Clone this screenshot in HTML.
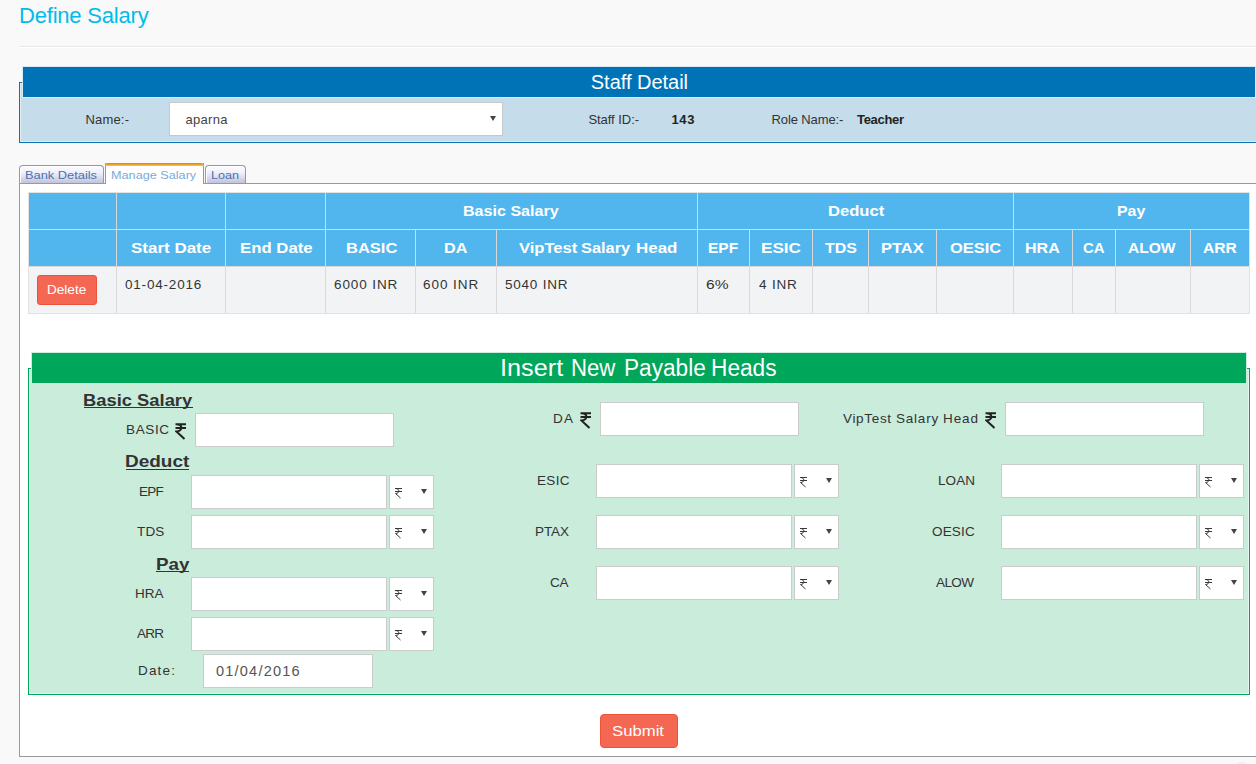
<!DOCTYPE html>
<html><head><meta charset="utf-8"><title>Define Salary</title>
<style>
html,body{margin:0;padding:0;}
body{width:1256px;height:764px;overflow:hidden;background:#f9f9f9;position:relative;font-family:"Liberation Sans",sans-serif;}
.a{position:absolute;box-sizing:border-box;}
.t{position:absolute;line-height:1;white-space:pre;font-family:"Liberation Sans",sans-serif;}
.inp{position:absolute;box-sizing:border-box;background:#fff;border:1px solid #cbcbcb;}
.vl{position:absolute;width:1px;background:#d9d9d9;}
.hl{position:absolute;height:1px;background:#d9d9d9;}
.arr{position:absolute;width:0;height:0;border-left:3px solid transparent;border-right:3px solid transparent;border-top:5px solid #444;}
.ru{position:absolute;}
</style></head><body>
<div class="a" style="left:19px;top:46px;width:1237px;height:1px;background:#e8e8e8"></div>
<div class="a" style="left:19px;top:47px;width:1237px;height:1px;background:#fff"></div>
<div class="a" style="left:19px;top:82px;width:1241px;height:61px;border:1px solid #0b73b6;background:#c5dcea;box-shadow:inset 0 0 0 1px rgba(255,255,255,.45)"></div>
<div class="a" style="left:22px;top:66px;width:1234px;height:32px;border:1px solid rgba(255,255,255,.85);background:#0073b7"></div>
<div class="a" style="left:169px;top:102px;width:334px;height:34px;border:1px solid #c8c8c8;background:#fff"></div>
<div class="arr" style="left:490px;top:116px"></div>
<div class="a" style="left:19px;top:183px;width:1242px;height:574px;border:1px solid #9a9a9a;background:#fff"></div>
<div class="a" style="left:19px;top:165px;width:85px;height:18px;border:1px solid #8c9ca4;border-bottom:none;border-radius:4px 4px 0 0;background:linear-gradient(#fbfbff,#f0f0fa 40%,#c2c2db);box-shadow:inset 1px 1px 0 #fff"></div>
<div class="a" style="left:205px;top:165px;width:41px;height:18px;border:1px solid #8c9ca4;border-bottom:none;border-radius:4px 4px 0 0;background:linear-gradient(#fbfbff,#f0f0fa 40%,#c2c2db);box-shadow:inset 1px 1px 0 #fff"></div>
<div class="a" style="left:105px;top:163px;width:99px;height:21px;border-left:1px solid #8c9ca4;border-right:1px solid #8c9ca4;background:#fff"></div>
<div class="a" style="left:105px;top:163px;width:99px;height:3px;border-radius:3px 3px 0 0;background:linear-gradient(#e07d14,#ffc63a)"></div>
<div class="a" style="left:28px;top:192px;width:1222px;height:122px;border:1px solid #e2e2e2;background:#f2f3f5"></div>
<div class="a" style="left:29px;top:193px;width:1220px;height:73px;background:#52b6ee"></div>
<div class="hl" style="left:29px;top:229px;width:1220px"></div>
<div class="hl" style="left:29px;top:266px;width:1220px"></div>
<div class="vl" style="left:116px;top:193px;height:120px"></div>
<div class="vl" style="left:225px;top:193px;height:120px"></div>
<div class="vl" style="left:325px;top:193px;height:120px"></div>
<div class="vl" style="left:697px;top:193px;height:120px"></div>
<div class="vl" style="left:1013px;top:193px;height:120px"></div>
<div class="vl" style="left:415px;top:230px;height:83px"></div>
<div class="vl" style="left:496px;top:230px;height:83px"></div>
<div class="vl" style="left:749px;top:230px;height:83px"></div>
<div class="vl" style="left:812px;top:230px;height:83px"></div>
<div class="vl" style="left:868px;top:230px;height:83px"></div>
<div class="vl" style="left:936px;top:230px;height:83px"></div>
<div class="vl" style="left:1072px;top:230px;height:83px"></div>
<div class="vl" style="left:1115px;top:230px;height:83px"></div>
<div class="vl" style="left:1190px;top:230px;height:83px"></div>
<div class="a" style="left:37px;top:275px;width:60px;height:30px;border:1px solid #ee5239;border-radius:3px;background:#f46853"></div>
<div class="a" style="left:28px;top:368px;width:1222px;height:327px;border:1px solid #00a65a;background:#caecdb;box-shadow:inset 0 0 0 1px rgba(255,255,255,.45)"></div>
<div class="a" style="left:31px;top:352px;width:1216px;height:32px;border:1px solid rgba(255,255,255,.8);background:#00a65a"></div>
<div class="inp" style="left:195px;top:413px;width:199px;height:34px"></div>
<div class="inp" style="left:191px;top:475px;width:196px;height:34px"></div>
<div class="inp" style="left:389px;top:475px;width:45px;height:34px"></div>
<div class="arr" style="left:421px;top:489px"></div>
<svg class="ru" style="left:395px;top:488px" width="8" height="11" viewBox="0 0 8 11"><path d="M0 0.5H7M0 3.5H7M0.5 0.5C5 0.5 5 5.5 0.5 5.5L5.5 10" fill="none" stroke="#3a3a3a" stroke-width="1"/></svg>
<div class="inp" style="left:191px;top:515px;width:196px;height:34px"></div>
<div class="inp" style="left:389px;top:515px;width:45px;height:34px"></div>
<div class="arr" style="left:421px;top:529px"></div>
<svg class="ru" style="left:395px;top:528px" width="8" height="11" viewBox="0 0 8 11"><path d="M0 0.5H7M0 3.5H7M0.5 0.5C5 0.5 5 5.5 0.5 5.5L5.5 10" fill="none" stroke="#3a3a3a" stroke-width="1"/></svg>
<div class="inp" style="left:191px;top:577px;width:196px;height:34px"></div>
<div class="inp" style="left:389px;top:577px;width:45px;height:34px"></div>
<div class="arr" style="left:421px;top:591px"></div>
<svg class="ru" style="left:395px;top:590px" width="8" height="11" viewBox="0 0 8 11"><path d="M0 0.5H7M0 3.5H7M0.5 0.5C5 0.5 5 5.5 0.5 5.5L5.5 10" fill="none" stroke="#3a3a3a" stroke-width="1"/></svg>
<div class="inp" style="left:191px;top:617px;width:196px;height:34px"></div>
<div class="inp" style="left:389px;top:617px;width:45px;height:34px"></div>
<div class="arr" style="left:421px;top:631px"></div>
<svg class="ru" style="left:395px;top:630px" width="8" height="11" viewBox="0 0 8 11"><path d="M0 0.5H7M0 3.5H7M0.5 0.5C5 0.5 5 5.5 0.5 5.5L5.5 10" fill="none" stroke="#3a3a3a" stroke-width="1"/></svg>
<div class="inp" style="left:203px;top:654px;width:170px;height:34px"></div>
<div class="inp" style="left:600px;top:402px;width:199px;height:34px"></div>
<div class="inp" style="left:596px;top:464px;width:196px;height:34px"></div>
<div class="inp" style="left:794px;top:464px;width:45px;height:34px"></div>
<div class="arr" style="left:826px;top:478px"></div>
<svg class="ru" style="left:800px;top:477px" width="8" height="11" viewBox="0 0 8 11"><path d="M0 0.5H7M0 3.5H7M0.5 0.5C5 0.5 5 5.5 0.5 5.5L5.5 10" fill="none" stroke="#3a3a3a" stroke-width="1"/></svg>
<div class="inp" style="left:596px;top:515px;width:196px;height:34px"></div>
<div class="inp" style="left:794px;top:515px;width:45px;height:34px"></div>
<div class="arr" style="left:826px;top:529px"></div>
<svg class="ru" style="left:800px;top:528px" width="8" height="11" viewBox="0 0 8 11"><path d="M0 0.5H7M0 3.5H7M0.5 0.5C5 0.5 5 5.5 0.5 5.5L5.5 10" fill="none" stroke="#3a3a3a" stroke-width="1"/></svg>
<div class="inp" style="left:596px;top:566px;width:196px;height:34px"></div>
<div class="inp" style="left:794px;top:566px;width:45px;height:34px"></div>
<div class="arr" style="left:826px;top:580px"></div>
<svg class="ru" style="left:800px;top:579px" width="8" height="11" viewBox="0 0 8 11"><path d="M0 0.5H7M0 3.5H7M0.5 0.5C5 0.5 5 5.5 0.5 5.5L5.5 10" fill="none" stroke="#3a3a3a" stroke-width="1"/></svg>
<div class="inp" style="left:1005px;top:402px;width:199px;height:34px"></div>
<div class="inp" style="left:1001px;top:464px;width:196px;height:34px"></div>
<div class="inp" style="left:1199px;top:464px;width:45px;height:34px"></div>
<div class="arr" style="left:1231px;top:478px"></div>
<svg class="ru" style="left:1205px;top:477px" width="8" height="11" viewBox="0 0 8 11"><path d="M0 0.5H7M0 3.5H7M0.5 0.5C5 0.5 5 5.5 0.5 5.5L5.5 10" fill="none" stroke="#3a3a3a" stroke-width="1"/></svg>
<div class="inp" style="left:1001px;top:515px;width:196px;height:34px"></div>
<div class="inp" style="left:1199px;top:515px;width:45px;height:34px"></div>
<div class="arr" style="left:1231px;top:529px"></div>
<svg class="ru" style="left:1205px;top:528px" width="8" height="11" viewBox="0 0 8 11"><path d="M0 0.5H7M0 3.5H7M0.5 0.5C5 0.5 5 5.5 0.5 5.5L5.5 10" fill="none" stroke="#3a3a3a" stroke-width="1"/></svg>
<div class="inp" style="left:1001px;top:566px;width:196px;height:34px"></div>
<div class="inp" style="left:1199px;top:566px;width:45px;height:34px"></div>
<div class="arr" style="left:1231px;top:580px"></div>
<svg class="ru" style="left:1205px;top:579px" width="8" height="11" viewBox="0 0 8 11"><path d="M0 0.5H7M0 3.5H7M0.5 0.5C5 0.5 5 5.5 0.5 5.5L5.5 10" fill="none" stroke="#3a3a3a" stroke-width="1"/></svg>
<svg class="ru" style="left:175px;top:423px" width="12" height="17" viewBox="0 0 12 17"><path d="M0.5 1.2H11M0.5 5H11M1.5 1.2C8 1.2 8 8.5 1.5 8.5L9.5 16" fill="none" stroke="#222" stroke-width="2"/></svg>
<svg class="ru" style="left:580px;top:412px" width="12" height="17" viewBox="0 0 12 17"><path d="M0.5 1.2H11M0.5 5H11M1.5 1.2C8 1.2 8 8.5 1.5 8.5L9.5 16" fill="none" stroke="#222" stroke-width="2"/></svg>
<svg class="ru" style="left:985px;top:412px" width="12" height="17" viewBox="0 0 12 17"><path d="M0.5 1.2H11M0.5 5H11M1.5 1.2C8 1.2 8 8.5 1.5 8.5L9.5 16" fill="none" stroke="#222" stroke-width="2"/></svg>
<div class="a" style="left:84px;top:407px;width:109px;height:1px;background:#333"></div>
<div class="a" style="left:126px;top:469px;width:63px;height:1px;background:#333"></div>
<div class="a" style="left:156px;top:571px;width:33px;height:1px;background:#333"></div>
<div class="a" style="left:600px;top:714px;width:78px;height:34px;border:1px solid #ee5239;border-radius:4px;background:#f46853"></div>
<div class="a" style="left:1233px;top:762px;width:18px;height:18px;border-radius:50%;background:#efefef"></div>
<div class="t" style="left:19.00px;top:5px;font-size:22px;font-weight:400;color:#00bce9;letter-spacing:-0.200px;">Define Salary</div>
<div class="t" style="left:590.80px;top:72px;font-size:20px;font-weight:400;color:#fff;letter-spacing:-0.018px;">Staff Detail</div>
<div class="t" style="left:85.40px;top:113px;font-size:13px;font-weight:400;color:#333;letter-spacing:0.200px;">Name:-</div>
<div class="t" style="left:185.40px;top:113px;font-size:13px;font-weight:400;color:#444;letter-spacing:0.320px;">aparna</div>
<div class="t" style="left:588.40px;top:113px;font-size:13px;font-weight:400;color:#333;letter-spacing:-0.044px;">Staff ID:-</div>
<div class="t" style="left:671.50px;top:113px;font-size:13px;font-weight:700;color:#222;letter-spacing:0.600px;">143</div>
<div class="t" style="left:771.50px;top:113px;font-size:13px;font-weight:400;color:#333;letter-spacing:-0.110px;">Role Name:-</div>
<div class="t" style="left:857.00px;top:113px;font-size:13px;font-weight:700;color:#222;letter-spacing:-0.300px;">Teacher</div>
<div class="t" style="left:25.38px;top:170px;font-size:11.5px;font-weight:400;color:#4674b2;transform:scaleX(1.1159);transform-origin:0 0;">Bank Details</div>
<div class="t" style="left:111.40px;top:170px;font-size:11.5px;font-weight:400;color:#7aabd8;transform:scaleX(1.1013);transform-origin:0 0;">Manage Salary</div>
<div class="t" style="left:211.10px;top:170px;font-size:11.5px;font-weight:400;color:#4674b2;transform:scaleX(1.1000);transform-origin:0 0;">Loan</div>
<div class="t" style="left:463.35px;top:204px;font-size:14px;font-weight:700;color:#fff;transform:scaleX(1.1488);transform-origin:0 0;">Basic Salary</div>
<div class="t" style="left:827.52px;top:204px;font-size:14px;font-weight:700;color:#fff;transform:scaleX(1.1848);transform-origin:0 0;">Deduct</div>
<div class="t" style="left:1117.47px;top:204px;font-size:14px;font-weight:700;color:#fff;transform:scaleX(1.1333);transform-origin:0 0;">Pay</div>
<div class="t" style="left:131.09px;top:241px;font-size:14px;font-weight:700;color:#fff;transform:scaleX(1.2123);transform-origin:0 0;">Start Date</div>
<div class="t" style="left:239.50px;top:241px;font-size:14px;font-weight:700;color:#fff;transform:scaleX(1.1966);transform-origin:0 0;">End Date</div>
<div class="t" style="left:345.52px;top:241px;font-size:14px;font-weight:700;color:#fff;transform:scaleX(1.1786);transform-origin:0 0;">BASIC</div>
<div class="t" style="left:444.45px;top:241px;font-size:14px;font-weight:700;color:#fff;transform:scaleX(1.1526);transform-origin:0 0;">DA</div>
<div class="t" style="left:518.60px;top:241px;font-size:14px;font-weight:700;color:#fff;transform:scaleX(1.1837);transform-origin:0 0;">VipTest</div>
<div class="t" style="left:581.23px;top:241px;font-size:14px;font-weight:700;color:#fff;transform:scaleX(1.1707);transform-origin:0 0;">Salary</div>
<div class="t" style="left:635.59px;top:241px;font-size:14px;font-weight:700;color:#fff;transform:scaleX(1.2094);transform-origin:0 0;">Head</div>
<div class="t" style="left:708.49px;top:241px;font-size:14px;font-weight:700;color:#fff;transform:scaleX(1.1077);transform-origin:0 0;">EPF</div>
<div class="t" style="left:761.28px;top:241px;font-size:14px;font-weight:700;color:#fff;transform:scaleX(1.2226);transform-origin:0 0;">ESIC</div>
<div class="t" style="left:825.30px;top:241px;font-size:14px;font-weight:700;color:#fff;transform:scaleX(1.1393);transform-origin:0 0;">TDS</div>
<div class="t" style="left:881.22px;top:241px;font-size:14px;font-weight:700;color:#fff;transform:scaleX(1.1771);transform-origin:0 0;">PTAX</div>
<div class="t" style="left:949.63px;top:241px;font-size:14px;font-weight:700;color:#fff;transform:scaleX(1.1714);transform-origin:0 0;">OESIC</div>
<div class="t" style="left:1025.35px;top:241px;font-size:14px;font-weight:700;color:#fff;transform:scaleX(1.1483);transform-origin:0 0;">HRA</div>
<div class="t" style="left:1083.33px;top:241px;font-size:14px;font-weight:700;color:#fff;transform:scaleX(1.0684);transform-origin:0 0;">CA</div>
<div class="t" style="left:1128.19px;top:241px;font-size:14px;font-weight:700;color:#fff;transform:scaleX(1.1119);transform-origin:0 0;">ALOW</div>
<div class="t" style="left:1203.48px;top:241px;font-size:14px;font-weight:700;color:#fff;transform:scaleX(1.1172);transform-origin:0 0;">ARR</div>
<div class="t" style="left:47.26px;top:283px;font-size:13px;font-weight:400;color:#fff;transform:scaleX(1.0444);transform-origin:0 0;">Delete</div>
<div class="t" style="left:124.76px;top:278px;font-size:13px;font-weight:400;color:#333;transform:scaleX(1.04);transform-origin:0 0;letter-spacing:0.759px;">01-04-2016</div>
<div class="t" style="left:333.66px;top:278px;font-size:13px;font-weight:400;color:#333;transform:scaleX(1.04);transform-origin:0 0;letter-spacing:0.849px;">6000 INR</div>
<div class="t" style="left:422.96px;top:278px;font-size:13px;font-weight:400;color:#333;transform:scaleX(1.04);transform-origin:0 0;letter-spacing:0.907px;">600 INR</div>
<div class="t" style="left:504.96px;top:278px;font-size:13px;font-weight:400;color:#333;transform:scaleX(1.04);transform-origin:0 0;letter-spacing:0.739px;">5040 INR</div>
<div class="t" style="left:758.50px;top:278px;font-size:13px;font-weight:400;color:#333;transform:scaleX(1.04);transform-origin:0 0;letter-spacing:0.774px;">4 INR</div>
<div class="t" style="left:705.61px;top:278px;font-size:13px;font-weight:400;color:#333;transform:scaleX(1.1941);transform-origin:0 0;">6%</div>
<div class="t" style="left:500.00px;top:357px;font-size:23px;font-weight:400;color:#fff;transform:scaleX(1.0982);transform-origin:0 0;">Insert</div>
<div class="t" style="left:571.27px;top:357px;font-size:23px;font-weight:400;color:#fff;transform:scaleX(0.9636);transform-origin:0 0;">New</div>
<div class="t" style="left:623.83px;top:357px;font-size:23px;font-weight:400;color:#fff;transform:scaleX(0.9838);transform-origin:0 0;">Payable</div>
<div class="t" style="left:711.43px;top:357px;font-size:23px;font-weight:400;color:#fff;transform:scaleX(0.9859);transform-origin:0 0;">Heads</div>
<div class="t" style="left:83.42px;top:392px;font-size:17px;font-weight:700;color:#333;transform:scaleX(1.0800);transform-origin:0 0;">Basic Salary</div>
<div class="t" style="left:125.38px;top:453px;font-size:17px;font-weight:700;color:#333;transform:scaleX(1.1161);transform-origin:0 0;">Deduct</div>
<div class="t" style="left:155.50px;top:556px;font-size:17px;font-weight:700;color:#333;transform:scaleX(1.1034);transform-origin:0 0;">Pay</div>
<div class="t" style="left:125.86px;top:423px;font-size:13px;font-weight:400;color:#333;transform:scaleX(1.04);transform-origin:0 0;letter-spacing:0.606px;">BASIC</div>
<div class="t" style="left:139.16px;top:485px;font-size:13px;font-weight:400;color:#333;transform:scaleX(1.04);transform-origin:0 0;letter-spacing:-0.798px;">EPF</div>
<div class="t" style="left:137.00px;top:525px;font-size:13px;font-weight:400;color:#333;transform:scaleX(1.04);transform-origin:0 0;letter-spacing:0.144px;">TDS</div>
<div class="t" style="left:135.36px;top:587px;font-size:13px;font-weight:400;color:#333;transform:scaleX(1.04);transform-origin:0 0;letter-spacing:0.029px;">HRA</div>
<div class="t" style="left:137.30px;top:627px;font-size:13px;font-weight:400;color:#333;transform:scaleX(1.04);transform-origin:0 0;letter-spacing:-0.712px;">ARR</div>
<div class="t" style="left:138.46px;top:664px;font-size:13px;font-weight:400;color:#333;transform:scaleX(1.04);transform-origin:0 0;letter-spacing:1.115px;">Date:</div>
<div class="t" style="left:215.76px;top:664px;font-size:14px;font-weight:400;color:#555;transform:scaleX(1.04);transform-origin:0 0;letter-spacing:1.147px;">01/04/2016</div>
<div class="t" style="left:552.96px;top:412px;font-size:13px;font-weight:400;color:#333;transform:scaleX(1.04);transform-origin:0 0;letter-spacing:1.173px;">DA</div>
<div class="t" style="left:536.66px;top:474px;font-size:13px;font-weight:400;color:#333;transform:scaleX(1.04);transform-origin:0 0;letter-spacing:0.301px;">ESIC</div>
<div class="t" style="left:535.46px;top:525px;font-size:13px;font-weight:400;color:#333;transform:scaleX(1.04);transform-origin:0 0;letter-spacing:-0.077px;">PTAX</div>
<div class="t" style="left:549.96px;top:576px;font-size:13px;font-weight:400;color:#333;transform:scaleX(1.04);transform-origin:0 0;letter-spacing:-0.173px;">CA</div>
<div class="t" style="left:843.20px;top:412px;font-size:13px;font-weight:400;color:#333;transform:scaleX(1.04);transform-origin:0 0;letter-spacing:0.644px;">VipTest</div>
<div class="t" style="left:895.66px;top:412px;font-size:13px;font-weight:400;color:#333;transform:scaleX(1.04);transform-origin:0 0;letter-spacing:0.742px;">Salary</div>
<div class="t" style="left:943.36px;top:412px;font-size:13px;font-weight:400;color:#333;transform:scaleX(1.04);transform-origin:0 0;letter-spacing:0.878px;">Head</div>
<div class="t" style="left:937.56px;top:474px;font-size:13px;font-weight:400;color:#333;transform:scaleX(1.04);transform-origin:0 0;letter-spacing:0.090px;">LOAN</div>
<div class="t" style="left:931.66px;top:525px;font-size:13px;font-weight:400;color:#333;transform:scaleX(1.04);transform-origin:0 0;letter-spacing:0.154px;">OESIC</div>
<div class="t" style="left:935.60px;top:576px;font-size:13px;font-weight:400;color:#333;transform:scaleX(1.04);transform-origin:0 0;letter-spacing:-0.615px;">ALOW</div>
<div class="t" style="left:612.01px;top:724px;font-size:14px;font-weight:400;color:#fff;transform:scaleX(1.1930);transform-origin:0 0;">Submit</div>
</body></html>
